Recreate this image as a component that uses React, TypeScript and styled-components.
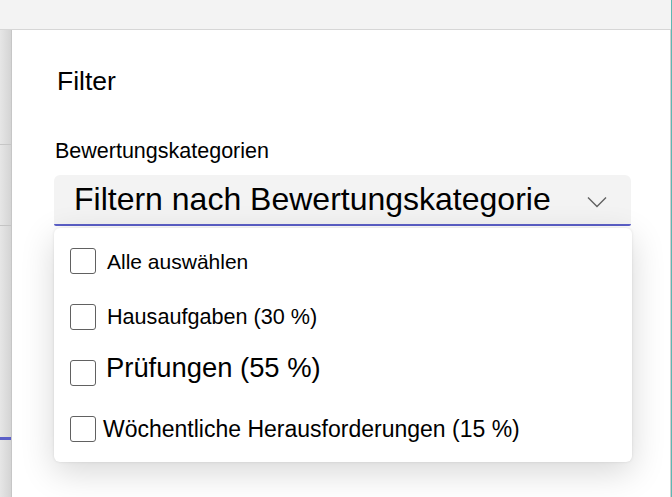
import React from "react";
import styled, { createGlobalStyle } from "styled-components";

const Global = createGlobalStyle`
  html, body { margin: 0; padding: 0; background: #f3f3f3; }
  body { font-family: "Liberation Sans", Arial, sans-serif; color: #000; }
  * { box-sizing: border-box; }
`;

const Page = styled.div`
  width: 672px;
  height: 497px;
  display: flex;
  flex-direction: column;
  border-right: 1px solid #5db8b3;
  overflow: hidden;
`;

const TopBar = styled.div`
  height: 30px;
  flex: none;
  background: #f3f3f3;
  border-bottom: 1px solid #d6d6d6;
`;

const Body = styled.div`
  flex: 1;
  display: flex;
  min-height: 0;
`;

const Strip = styled.div`
  width: 11px;
  flex: none;
  display: flex;
  flex-direction: column;
  background: linear-gradient(to right, #e6e6e6, #d4d4d4);
`;

const StripGap = styled.div<{ $h: number }>`
  height: ${(p) => p.$h}px;
  flex: none;
`;

const StripLine = styled.div<{ $color: string; $h: number }>`
  height: ${(p) => p.$h}px;
  flex: none;
  background: ${(p) => p.$color};
`;

const Panel = styled.div`
  flex: 1;
  background: #fff;
  border-left: 1px solid #c6c6c6;
  border-right: 1px solid #cfcfcf;
  padding: 36px 39px 0 42px;
  display: flex;
  flex-direction: column;
`;

const Title = styled.h2`
  margin: 0;
  font-size: 26.5px;
  font-weight: 400;
  line-height: 30px;
  padding-left: 3px;
`;

const Label = styled.div`
  margin-top: 43px;
  font-size: 21.5px;
  line-height: 24px;
  padding-left: 1px;
`;

const Select = styled.div`
  margin-top: 12px;
  height: 51px;
  background: #f3f3f3;
  border-radius: 6px 6px 2px 2px;
  border-bottom: 2px solid #5b5fc7;
  display: flex;
  align-items: center;
  justify-content: space-between;
  padding: 0 24px 2px 20px;
`;

const SelectText = styled.span`
  font-size: 32px;
  line-height: 36px;
`;

const Chevron = styled.svg`
  width: 20px;
  height: 12px;
  margin-top: 6px;
`;

const Menu = styled.div`
  margin-top: 2px;
  margin-right: -1px;
  background: #fff;
  border-radius: 6px;
  box-shadow: 0 10px 34px rgba(0, 0, 0, 0.16), 0 0 3px rgba(0, 0, 0, 0.1);
  padding: 20px 16px 20px 16px;
  display: flex;
  flex-direction: column;
  gap: 30px;
`;

const Row = styled.label`
  height: 26px;
  display: flex;
  align-items: center;
  gap: 11px;
`;

const Box = styled.span`
  width: 26px;
  height: 26px;
  flex: none;
  border: 1px solid #616161;
  border-radius: 3px;
  background: #fff;
`;

const RowText = styled.span<{ $size: number; $lift?: number; $shift?: number }>`
  font-size: ${(p) => p.$size}px;
  line-height: 1;
  white-space: nowrap;
  position: relative;
  top: ${(p) => -(p.$lift || 0)}px;
  margin-left: ${(p) => p.$shift || 0}px;
`;

const items: { text: string; size: number; lift?: number; shift?: number }[] = [
  { text: "Alle auswählen", size: 21 },
  { text: "Hausaufgaben (30 %)", size: 21.6 },
  { text: "Prüfungen (55 %)", size: 27.4, lift: 5, shift: -1 },
  { text: "Wöchentliche Herausforderungen (15 %)", size: 23, shift: -4 },
];

export default function App() {
  return (
    <>
      <Global />
      <Page>
        <TopBar />
        <Body>
          <Strip>
            <StripGap $h={114} />
            <StripLine $h={1} $color="#c6c6c6" />
            <StripGap $h={80} />
            <StripLine $h={1} $color="#c4c4c4" />
            <StripGap $h={211} />
            <StripLine $h={3} $color="#5b5fc7" />
          </Strip>
          <Panel>
            <Title>Filter</Title>
            <Label>Bewertungskategorien</Label>
            <Select>
              <SelectText>Filtern nach Bewertungskategorie</SelectText>
              <Chevron viewBox="0 0 20 12" fill="none">
                <path d="M1 1.5 L10 10.5 L19 1.5" stroke="#616161" strokeWidth="1.4" />
              </Chevron>
            </Select>
            <Menu>
              {items.map((it) => (
                <Row key={it.text}>
                  <Box />
                  <RowText $size={it.size} $lift={it.lift} $shift={it.shift}>
                    {it.text}
                  </RowText>
                </Row>
              ))}
            </Menu>
          </Panel>
        </Body>
      </Page>
    </>
  );
}
